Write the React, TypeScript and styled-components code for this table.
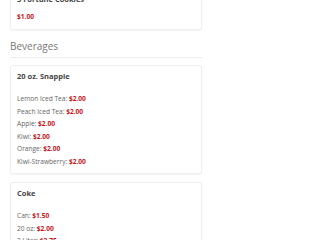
import styled, { createGlobalStyle } from "styled-components";

const GlobalStyle = createGlobalStyle`
  html, body {
    margin: 0;
    padding: 0;
    background: #fff;
    font-family: "Open Sans", "Liberation Sans", sans-serif;
    overflow: hidden;
  }
`;

const Menu = styled.div`
  width: 192px;
  padding-left: 10px;
  margin-top: -12px;
`;

const Card = styled.div<{ $bottom?: number }>`
  border: 1px solid #efefef;
  border-radius: 2px;
  box-shadow: 0 1px 2px rgba(0, 0, 0, 0.05);
  padding: 4px 6px ${(p) => p.$bottom ?? 4}px;
  margin-bottom: 8px;
  background: #fff;
`;

const ItemTitle = styled.div<{ $gap?: number }>`
  font-size: 7.5px;
  font-weight: 700;
  line-height: 12px;
  color: #444;
  margin-bottom: ${(p) => p.$gap ?? 11.5}px;
`;

const PriceLine = styled.div`
  font-size: 6.6px;
  line-height: 12.6px;
  color: #666;
  white-space: nowrap;
`;

const Price = styled.span`
  color: #c4161c;
  font-weight: 700;
`;

const SectionTitle = styled.h2`
  margin: 9px 0 7px;
  padding-bottom: 4px;
  border-bottom: 1px solid #eee;
  font-size: 10px;
  line-height: 14px;
  font-weight: 400;
  color: #777;
`;

type Option = { label?: string; price: string };
type Item = { name: string; options: Option[]; gap?: number; bottom?: number };

const snacks: Item = {
  name: "5 Fortune Cookies",
  options: [{ price: "$1.00" }],
  gap: 6,
  bottom: 5,
};

const beverages: Item[] = [
  {
    name: "20 oz. Snapple",
    options: [
      { label: "Lemon Iced Tea", price: "$2.00" },
      { label: "Peach Iced Tea", price: "$2.00" },
      { label: "Apple", price: "$2.00" },
      { label: "Kiwi", price: "$2.00" },
      { label: "Orange", price: "$2.00" },
      { label: "Kiwi-Strawberry", price: "$2.00" },
    ],
  },
  {
    name: "Coke",
    options: [
      { label: "Can", price: "$1.50" },
      { label: "20 oz", price: "$2.00" },
      { label: "2 Liter", price: "$2.75" },
    ],
  },
];

function MenuCard({ item }: { item: Item }) {
  return (
    <Card $bottom={item.bottom}>
      <ItemTitle $gap={item.gap}>{item.name}</ItemTitle>
      {item.options.map((o, i) => (
        <PriceLine key={i}>
          {o.label && `${o.label}: `}
          <Price>{o.price}</Price>
        </PriceLine>
      ))}
    </Card>
  );
}

export default function App() {
  return (
    <>
      <GlobalStyle />
      <Menu>
        <MenuCard item={snacks} />
        <SectionTitle>Beverages</SectionTitle>
        {beverages.map((b) => (
          <MenuCard key={b.name} item={b} />
        ))}
      </Menu>
    </>
  );
}
